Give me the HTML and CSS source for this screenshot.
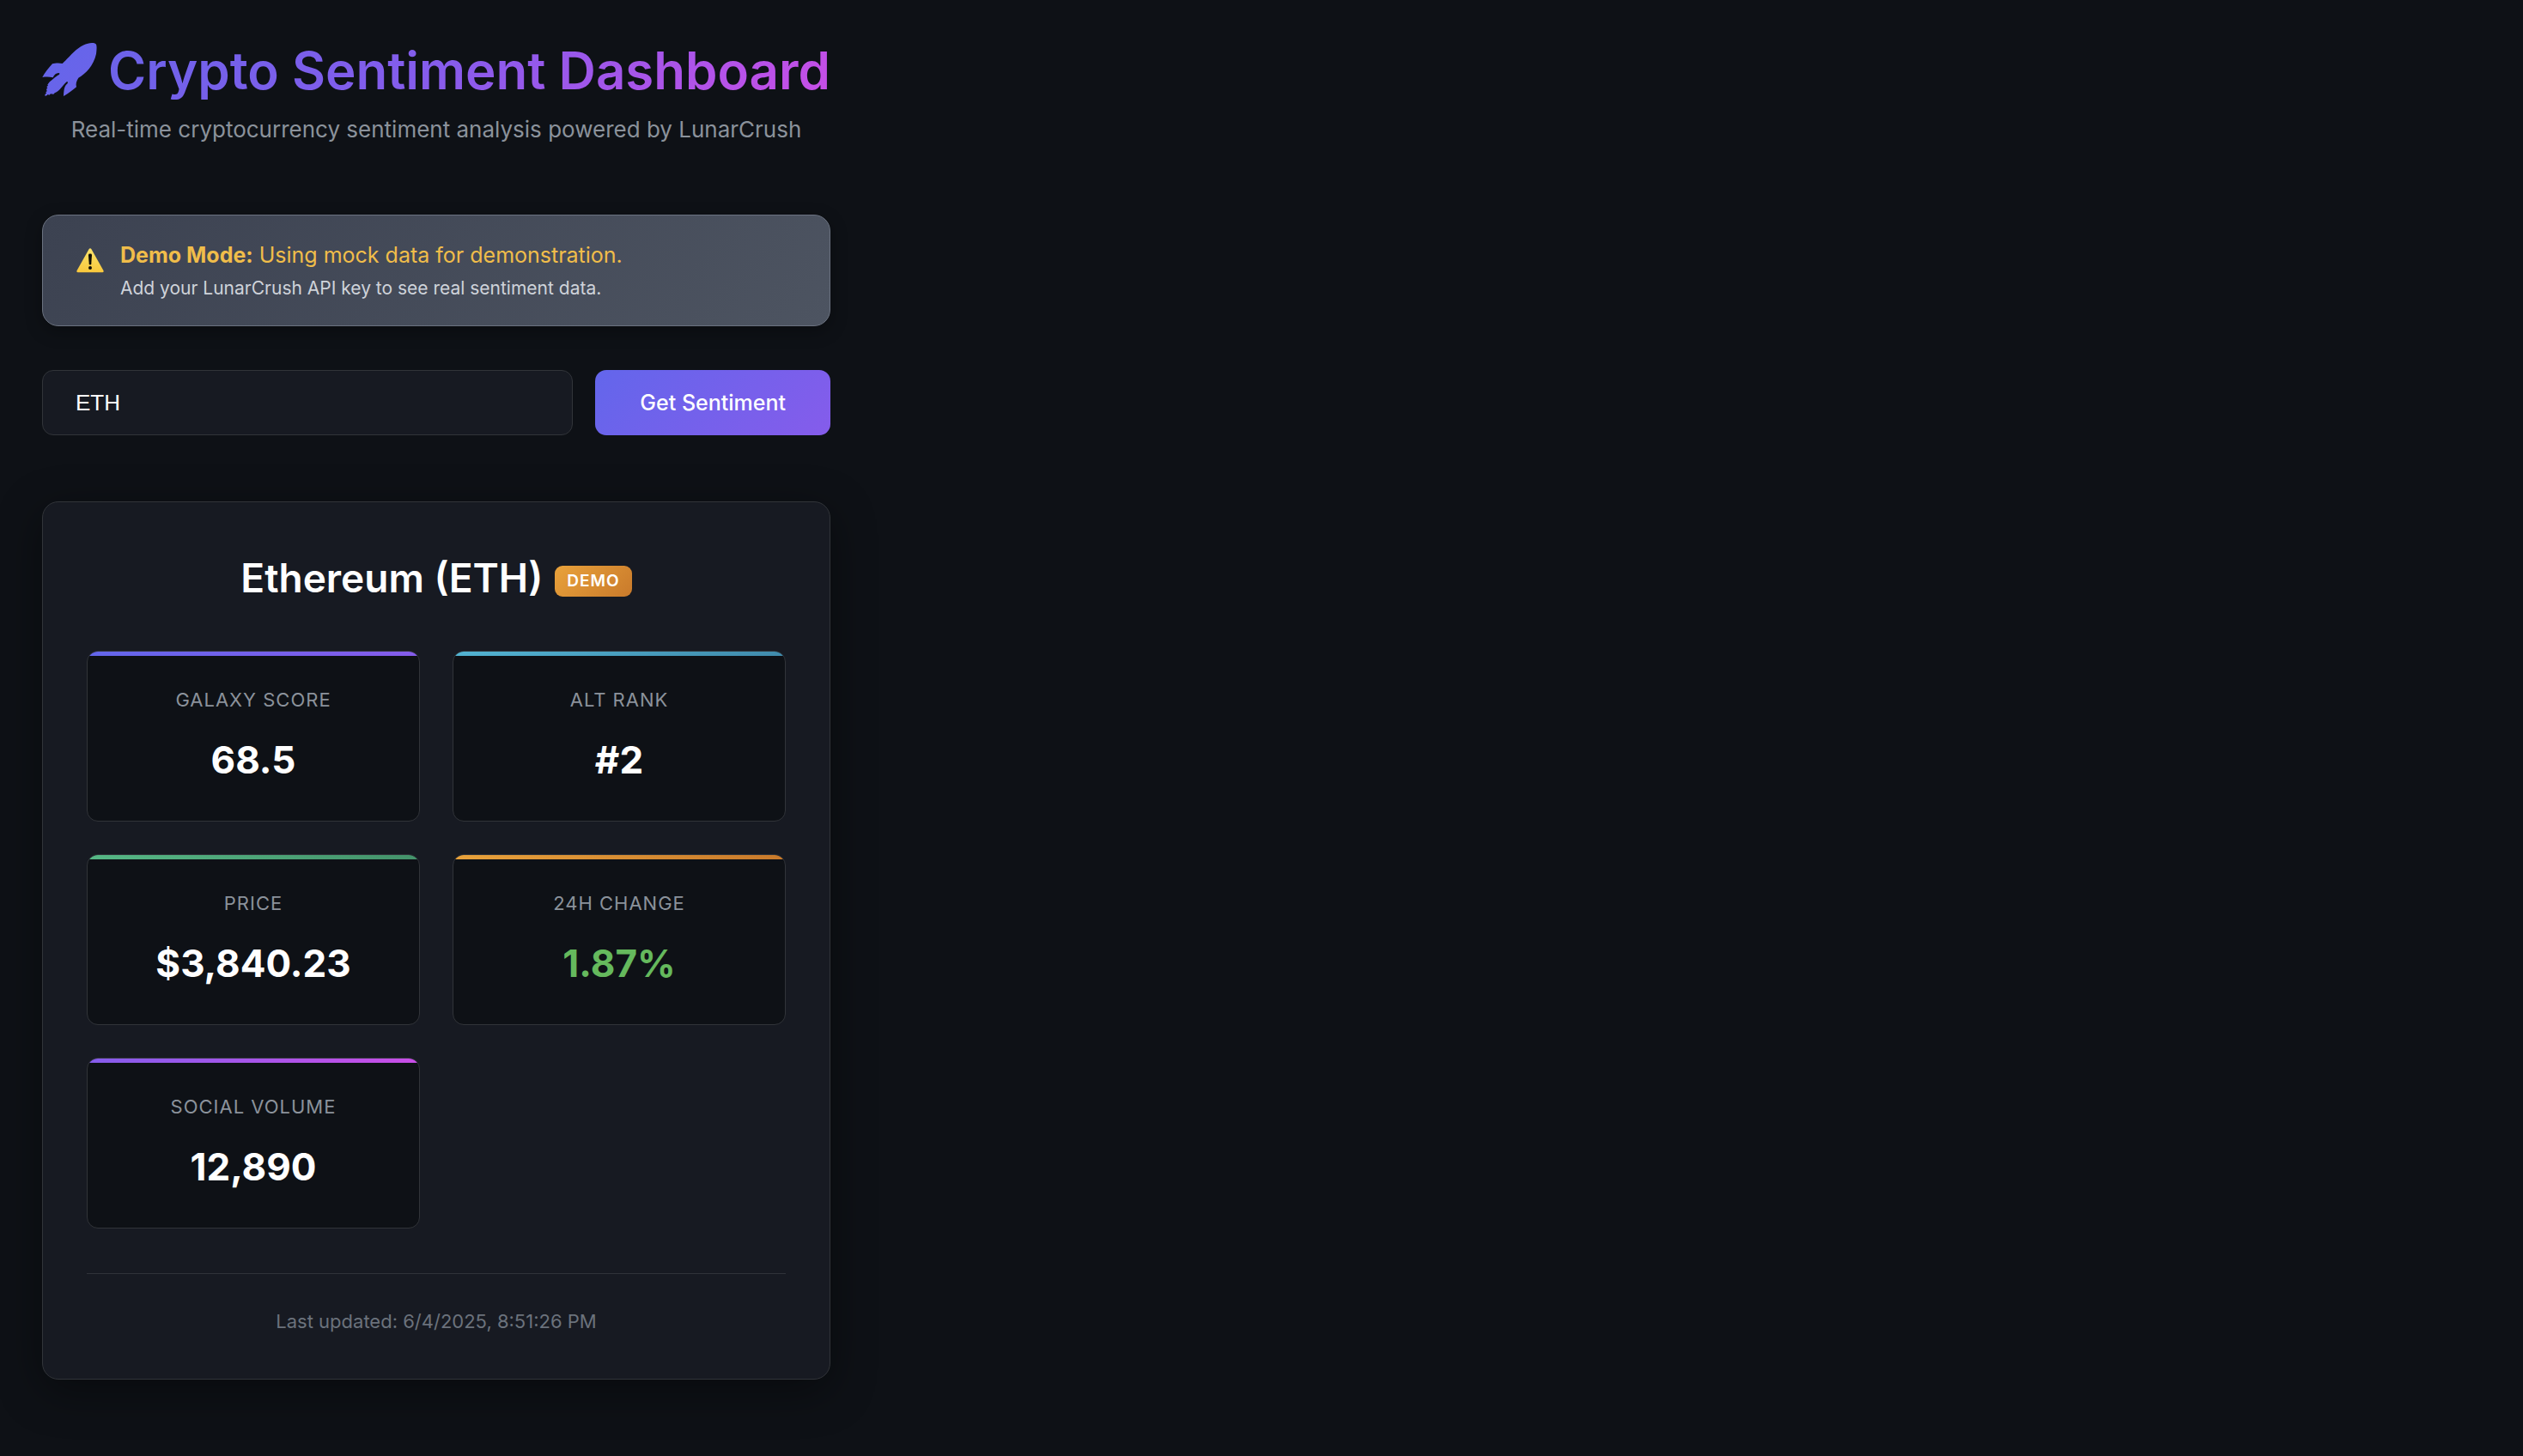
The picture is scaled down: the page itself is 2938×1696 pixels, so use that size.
FILE: index.html
```html
<!DOCTYPE html>
<html lang="en">
<head>
<meta charset="utf-8">
<meta name="viewport" content="width=device-width, initial-scale=1">
<title>Crypto Sentiment Dashboard</title>
<link rel="stylesheet" href="styles.css">
</head>
<body>
<main class="dashboard">
  <header class="header">
    <h1 class="title">
      <svg class="rocket" viewBox="0 0 192 190" aria-hidden="true">
        <defs>
          <linearGradient id="rocket-fill" x1="0" y1="0" x2="1" y2="1">
            <stop offset="0" stop-color="#6366eb"/>
            <stop offset="1" stop-color="#6c63e9"/>
          </linearGradient>
        </defs>
        <path fill="url(#rocket-fill)" d="M188 6C184 2 172 1 160 4C138 9 115 27 95 50C85 60 78 68 71 74C60 71 45 72 36 75C22 90 8 108 1 122C14 120 26 120 38 123C42 113 48 108 58 107C64 108 61 113 54 116C47 120 40 127 34 132C27 137 23 142 19 148L21 151L16 155L19 160L15 163L17 171L13 174L15 178L10 182L11 188L17 185L20 182L25 184L30 180L40 181L44 177C62 169 70 152 84 139C91 135 93 142 84 148C76 158 76 173 75 188C92 180 107 166 120 156C117 145 120 135 127 124C152 109 180 82 189 40C191 24 192 12 188 6Z"/>
      </svg>
      <span class="title-text">Crypto Sentiment Dashboard</span>
    </h1>
    <p class="subtitle">Real-time cryptocurrency sentiment analysis powered by LunarCrush</p>
  </header>

  <aside class="notice">
    <svg class="notice-icon" viewBox="0 0 96 88" aria-hidden="true">
      <defs>
        <linearGradient id="warning-fill" x1="0" y1="0" x2="0" y2="1">
          <stop offset="0" stop-color="#fbe36a"/>
          <stop offset="1" stop-color="#f9c83c"/>
        </linearGradient>
      </defs>
      <path fill="url(#warning-fill)" d="M44 3Q48 -2 52 3L95 80Q97 86 91 86H5Q-1 86 1 80Z"/>
      <path fill="#0f0d05" d="M42 24Q42 20 48 20T54 24L52 55Q51 59 48 59T44 55Z"/>
      <circle cx="48" cy="70" r="6" fill="#0f0d05"/>
    </svg>
    <div>
      <p class="notice-main"><strong>Demo Mode:</strong> Using mock data for demonstration.</p>
      <p class="notice-sub">Add your LunarCrush API key to see real sentiment data.</p>
    </div>
  </aside>

  <form class="search">
    <input class="search-input" type="text" value="ETH" aria-label="Cryptocurrency symbol">
    <button class="search-button" type="button">Get Sentiment</button>
  </form>

  <section class="card">
    <div class="card-head">
      <h2 class="coin">Ethereum (ETH)</h2>
      <span class="badge">DEMO</span>
    </div>
    <dl class="metrics">
      <div class="metric metric-galaxy"><dt>GALAXY SCORE</dt><dd>68.5</dd></div>
      <div class="metric metric-rank"><dt>ALT RANK</dt><dd>#2</dd></div>
      <div class="metric metric-price"><dt>PRICE</dt><dd>$3,840.23</dd></div>
      <div class="metric metric-change"><dt>24H CHANGE</dt><dd class="positive">1.87%</dd></div>
      <div class="metric metric-social"><dt>SOCIAL VOLUME</dt><dd>12,890</dd></div>
    </dl>
    <footer class="updated">Last updated: 6/4/2025, 8:51:26 PM</footer>
  </section>
</main>
</body>
</html>
```
FILE: styles.css
```css
* {
  box-sizing: border-box;
  margin: 0;
}

body {
  min-height: 100vh;
  background: #0e1116;
  color: #fff;
  font-family: Inter, "Liberation Sans", sans-serif;
  -webkit-font-smoothing: antialiased;
}

.dashboard {
  max-width: 1016px;
  padding: 48px 49px 40px;
}

.header {
  margin-bottom: 78px;
  text-align: center;
}

.title {
  display: flex;
  align-items: center;
  justify-content: space-between;
  font-size: 60px;
  font-weight: 600;
  line-height: 68px;
  white-space: nowrap;
}

.rocket {
  flex: none;
  width: 64px;
  height: 64px;
  margin-bottom: 2px;
}

.title-text {
  background: linear-gradient(135deg, #6b63e9 0%, #855cec 45%, #c94ee7 100%);
  background-clip: text;
  -webkit-background-clip: text;
  color: transparent;
}

.subtitle {
  margin-top: 14px;
  color: #8b929b;
  font-size: 26px;
  line-height: 42px;
}

.notice {
  display: flex;
  align-items: center;
  gap: 19px;
  margin-bottom: 51px;
  padding: 26px 39px;
  border: 1px solid #6b7280;
  border-radius: 19px;
  background: linear-gradient(135deg, #3c4251, #4d5461);
  box-shadow: 0 6px 20px rgba(0, 0, 0, 0.3);
}

.notice-icon {
  flex: none;
  width: 32px;
  height: 29px;
  margin-bottom: 35px;
  align-self: flex-end;
}

.notice-main {
  color: #f0bd4a;
  font-size: 25px;
  line-height: 40px;
}

.notice-sub {
  margin-top: 2px;
  color: #cfd3da;
  font-size: 21px;
  line-height: 34px;
}

.search {
  display: flex;
  gap: 26px;
  margin-bottom: 77px;
}

.search-input,
.search-button {
  height: 76px;
  border-radius: 13px;
  font-size: 26px;
  line-height: 32px;
}

.search-input {
  flex: 1;
  min-width: 0;
  padding: 0 38px;
  border: 1px solid #313439;
  background: #171a22;
  color: #fff;
  font-family: "Liberation Sans", Arial, sans-serif;
}

.search-button {
  padding: 0 52px;
  border: 0;
  background: linear-gradient(135deg, #6366eb, #855ceb);
  color: #fff;
  font-family: inherit;
  font-size: 25px;
  font-weight: 500;
}

.card {
  padding: 50px 51px 49px;
  border: 1px solid #313439;
  border-radius: 19px;
  background: #171a22;
  box-shadow: 0 13px 52px rgba(0, 0, 0, 0.4);
}

.card-head {
  display: flex;
  align-items: center;
  justify-content: center;
  gap: 14px;
  margin-bottom: 47px;
}

.coin {
  font-size: 46px;
  font-weight: 600;
  line-height: 76px;
}

.badge {
  margin-top: 8px;
  padding: 0 14px;
  border-radius: 9px;
  background: linear-gradient(135deg, #e9a23b, #c97a2b);
  font-size: 19px;
  font-weight: 600;
  letter-spacing: 1px;
  line-height: 36px;
}

.metrics {
  display: grid;
  grid-template-columns: 1fr 1fr;
  gap: 38px;
}

.metric {
  position: relative;
  overflow: hidden;
  padding: 38px 20px 39px;
  border: 1px solid #313439;
  border-radius: 13px;
  background: #0e1116;
  text-align: center;
}

.metric::before {
  content: "";
  position: absolute;
  inset: 0 0 auto;
  height: 5px;
}

.metric-galaxy::before { background: linear-gradient(90deg, #6366eb, #855ceb); }
.metric-rank::before { background: linear-gradient(90deg, #52b3d2, #408bac); }
.metric-price::before { background: linear-gradient(90deg, #56b886, #44936b); }
.metric-change::before { background: linear-gradient(90deg, #e9a23b, #c97a2b); }
.metric-social::before { background: linear-gradient(90deg, #855ceb, #c94ee7); }

.metric dt {
  color: #8b929b;
  font-size: 22px;
  font-weight: 400;
  letter-spacing: 1px;
  line-height: 36px;
}

.metric dd {
  margin-top: 20px;
  font-size: 44px;
  font-weight: 700;
  line-height: 64px;
}

.metric .positive {
  color: #65b95d;
}

.updated {
  margin-top: 52px;
  padding-top: 37px;
  border-top: 1px solid #2f3339;
  color: #6b727c;
  font-size: 22px;
  line-height: 36px;
  text-align: center;
}
```
